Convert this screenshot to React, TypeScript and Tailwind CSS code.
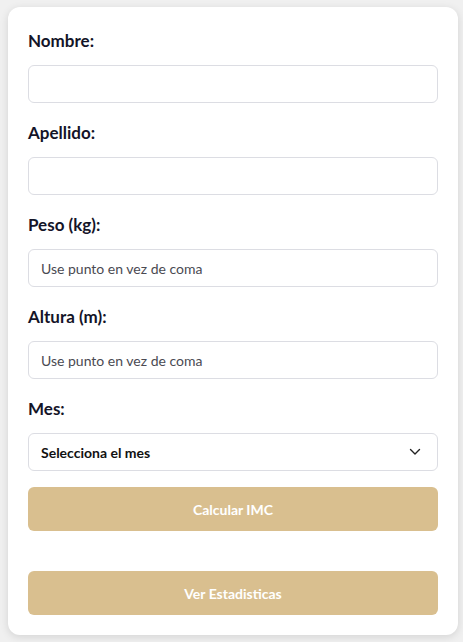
import React from "react";

const font = { fontFamily: "Lato, 'Open Sans', sans-serif" };

function Field({ label, placeholder }: { label: string; placeholder?: string }) {
  return (
    <div className="flex flex-col">
      <label className="h-6 leading-6 text-[17px] font-bold text-[#141428] mb-3">{label}</label>
      <input
        className="h-[38px] w-full rounded-md border border-[#dcdde3] bg-white px-3 text-[14px] text-[#333] placeholder:text-[#4a4a52] outline-none"
        placeholder={placeholder}
      />
    </div>
  );
}

export default function App() {
  return (
    <div className="min-h-[642px] w-[463px] bg-[#f0f0f0] pl-2 pt-[7px] pb-[7px]" style={font}>
      <div className="flex w-[450px] flex-col gap-[18px] rounded-xl bg-white px-5 pt-[22px] pb-5 shadow-[0_2px_8px_rgba(0,0,0,0.12)]">
        <Field label="Nombre:" />
        <Field label="Apellido:" />
        <Field label="Peso (kg):" placeholder="Use punto en vez de coma" />
        <Field label="Altura (m):" placeholder="Use punto en vez de coma" />
        <div className="flex flex-col">
          <label className="h-6 leading-6 text-[17px] font-bold text-[#141428] mb-3">Mes:</label>
          <div className="flex h-[38px] items-center justify-between rounded-md border border-[#dcdde3] bg-white pl-3 pr-4">
            <span className="text-[14px] font-bold text-[#111]">Selecciona el mes</span>
            <svg width="12" height="8" viewBox="0 0 12 8" fill="none">
              <path d="M1.5 1.5 6 6l4.5-4.5" stroke="#222" strokeWidth="1.4" strokeLinecap="round" strokeLinejoin="round" />
            </svg>
          </div>
        </div>
        <div className="flex flex-col">
          <button className="mt-[-2px] h-11 w-full rounded-md bg-[#d9bf8f] text-[14px] font-bold text-white">Calcular IMC</button>
          <button className="mt-10 h-11 w-full rounded-md bg-[#d9bf8f] text-[14px] font-bold text-white">Ver Estadisticas</button>
        </div>
      </div>
    </div>
  );
}
